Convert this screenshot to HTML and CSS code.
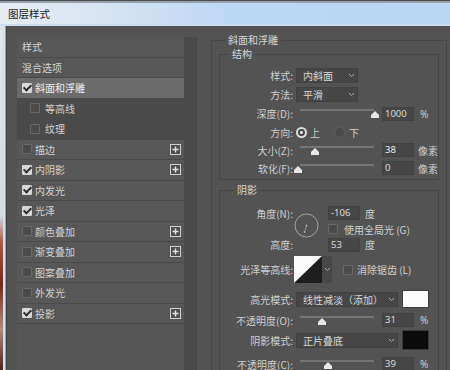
FILE: index.html
```html
<!DOCTYPE html>
<html lang="zh">
<head>
<meta charset="utf-8">
<title>图层样式</title>
<link rel="stylesheet" href="styles.css">
</head>
<body>
<div class="window">
  <div class="titlebar"><span class="title">图层样式</span></div>
  <div class="frame">
    <div class="edge"></div>
    <div class="client">
      <div class="listbox">
        <ul class="items">
          <li class="row">样式</li>
          <li class="row">混合选项</li>
          <li class="row selected"><span class="cb on"></span>斜面和浮雕</li>
          <li class="row sub"><span class="cb"></span>等高线</li>
          <li class="row sub"><span class="cb"></span>纹理</li>
          <li class="row"><span class="cb"></span>描边<svg class="plus" width="11" height="11" viewBox="0 0 11 11"><rect x="0.5" y="0.5" width="10" height="10" fill="#4f4f4f" stroke="#cfcfcf"/><path d="M5.5 2.5v6M2.5 5.5h6" stroke="#e2e2e2" stroke-width="1.4"/></svg></li>
          <li class="row"><span class="cb on"></span>内阴影<svg class="plus" width="11" height="11" viewBox="0 0 11 11"><rect x="0.5" y="0.5" width="10" height="10" fill="#4f4f4f" stroke="#cfcfcf"/><path d="M5.5 2.5v6M2.5 5.5h6" stroke="#e2e2e2" stroke-width="1.4"/></svg></li>
          <li class="row"><span class="cb on"></span>内发光</li>
          <li class="row"><span class="cb on"></span>光泽</li>
          <li class="row"><span class="cb"></span>颜色叠加<svg class="plus" width="11" height="11" viewBox="0 0 11 11"><rect x="0.5" y="0.5" width="10" height="10" fill="#4f4f4f" stroke="#cfcfcf"/><path d="M5.5 2.5v6M2.5 5.5h6" stroke="#e2e2e2" stroke-width="1.4"/></svg></li>
          <li class="row"><span class="cb"></span>渐变叠加<svg class="plus" width="11" height="11" viewBox="0 0 11 11"><rect x="0.5" y="0.5" width="10" height="10" fill="#4f4f4f" stroke="#cfcfcf"/><path d="M5.5 2.5v6M2.5 5.5h6" stroke="#e2e2e2" stroke-width="1.4"/></svg></li>
          <li class="row"><span class="cb"></span>图案叠加</li>
          <li class="row"><span class="cb"></span>外发光</li>
          <li class="row"><span class="cb on"></span>投影<svg class="plus" width="11" height="11" viewBox="0 0 11 11"><rect x="0.5" y="0.5" width="10" height="10" fill="#4f4f4f" stroke="#cfcfcf"/><path d="M5.5 2.5v6M2.5 5.5h6" stroke="#e2e2e2" stroke-width="1.4"/></svg></li>
        </ul>
        <div class="scroll"></div>
      </div>

      <div class="panel">
        <fieldset class="group outer">
          <legend>斜面和浮雕</legend>
          <fieldset class="group inner">
            <legend>结构</legend>
            <div class="frow">
              <span class="lbl">样式:</span>
              <div class="select w62"><span>内斜面</span><svg class="chev" width="7" height="5" viewBox="0 0 7 5"><path d="M1 1l2.5 2.5L6 1" fill="none" stroke="#a8a8a8"/></svg></div>
            </div>
            <div class="frow">
              <span class="lbl">方法:</span>
              <div class="select w62"><span>平滑</span><svg class="chev" width="7" height="5" viewBox="0 0 7 5"><path d="M1 1l2.5 2.5L6 1" fill="none" stroke="#a8a8a8"/></svg></div>
            </div>
            <div class="frow">
              <span class="lbl">深度(D):</span>
              <div class="slider"><div class="track"></div><svg class="thumb" style="margin-left:75px" width="8" height="7" viewBox="0 0 8 7"><polygon points="4,0 8,4 8,7 0,7 0,4" fill="#e8e8e8"/></svg></div>
              <span class="field">1000</span><span class="unit pct">%</span>
            </div>
            <div class="frow s">
              <span class="lbl">方向:</span>
              <svg class="radio" width="11" height="11" viewBox="0 0 11 11"><circle cx="5.5" cy="5.5" r="5.5" fill="#dedede"/><circle cx="5.5" cy="5.5" r="3.4" fill="#3a3a3a"/><circle cx="5.5" cy="5.5" r="1.7" fill="#dedede"/></svg><span class="rtext">上</span>
              <svg class="radio r2" width="11" height="11" viewBox="0 0 11 11"><circle cx="5.5" cy="5.5" r="5" fill="#4a4a4a" stroke="#606060"/></svg><span class="rtext">下</span>
            </div>
            <div class="frow s">
              <span class="lbl">大小(Z):</span>
              <div class="slider"><div class="track"></div><svg class="thumb" style="margin-left:15px" width="8" height="7" viewBox="0 0 8 7"><polygon points="4,0 8,4 8,7 0,7 0,4" fill="#e8e8e8"/></svg></div>
              <span class="field hi">38</span><span class="unit px">像素</span>
            </div>
            <div class="frow s">
              <span class="lbl">软化(F):</span>
              <div class="slider"><div class="track"></div><svg class="thumb" style="margin-left:-2px" width="8" height="7" viewBox="0 0 8 7"><polygon points="4,0 8,4 8,7 0,7 0,4" fill="#e8e8e8"/></svg></div>
              <span class="field">0</span><span class="unit px">像素</span>
            </div>
          </fieldset>

          <fieldset class="group inner shadow">
            <legend>阴影</legend>
            <div class="angle">
              <span class="lbl g1">角度(N):</span>
              <svg class="dial" width="25" height="25" viewBox="0 0 25 25"><circle cx="12.5" cy="12.5" r="11.5" fill="none" stroke="#a3a3a3"/><path d="M12.5 12.5L10.6 19" stroke="#9a9a9a" stroke-width="0.8"/><circle cx="12.5" cy="12.5" r="0.9" fill="#b0b0b0"/><circle cx="10.6" cy="19" r="0.9" fill="#b0b0b0"/></svg>
              <div class="ctl g1"><span class="field">-106</span><span class="unit deg">度</span></div>
              <div class="ctl g2"><span class="cb"></span><span class="ctext">使用全局光 (G)</span></div>
              <span class="lbl g3">高度:</span>
              <div class="ctl g3"><span class="field">53</span><span class="unit deg">度</span></div>
            </div>
            <div class="frow contour-row">
              <span class="lbl">光泽等高线:</span>
              <div class="contour">
                <svg width="28" height="27" viewBox="0 0 28 27"><rect width="28" height="27" fill="#1e1e1e"/><polygon points="0,0 28,0 0,27" fill="#fafafa"/></svg>
                <div class="cbtn"><svg class="chev" width="7" height="5" viewBox="0 0 7 5"><path d="M1 1l2.5 2.5L6 1" fill="none" stroke="#a8a8a8"/></svg></div>
              </div>
              <span class="cb aa"></span><span class="ctext">消除锯齿 (L)</span>
            </div>
            <div class="frow mode">
              <span class="lbl">高光模式:</span>
              <div class="select w102"><span>线性减淡（添加）</span><svg class="chev" width="7" height="5" viewBox="0 0 7 5"><path d="M1 1l2.5 2.5L6 1" fill="none" stroke="#a8a8a8"/></svg></div>
              <span class="swatch white"></span>
            </div>
            <div class="frow op op1">
              <span class="lbl">不透明度(O):</span>
              <div class="slider"><div class="track"></div><svg class="thumb" style="margin-left:22px" width="8" height="7" viewBox="0 0 8 7"><polygon points="4,0 8,4 8,7 0,7 0,4" fill="#e8e8e8"/></svg></div>
              <span class="field">31</span><span class="unit pct">%</span>
            </div>
            <div class="frow mode2">
              <span class="lbl">阴影模式:</span>
              <div class="select w102"><span>正片叠底</span><svg class="chev" width="7" height="5" viewBox="0 0 7 5"><path d="M1 1l2.5 2.5L6 1" fill="none" stroke="#a8a8a8"/></svg></div>
              <span class="swatch black"></span>
            </div>
            <div class="frow op op2">
              <span class="lbl">不透明度(C):</span>
              <div class="slider"><div class="track"></div><svg class="thumb" style="margin-left:28px" width="8" height="7" viewBox="0 0 8 7"><polygon points="4,0 8,4 8,7 0,7 0,4" fill="#e8e8e8"/></svg></div>
              <span class="field">39</span><span class="unit pct">%</span>
            </div>
          </fieldset>
        </fieldset>
      </div>
    </div>
  </div>
</div>
</body>
</html>
```

FILE: styles.css
```css
* { box-sizing: border-box; }
html, body { margin: 0; padding: 0; }
body {
  width: 450px;
  height: 370px;
  overflow: hidden;
  background: #535353;
  font-family: "Noto Sans CJK SC", "Noto Sans", sans-serif;
  font-size: 10px;
  color: #d0d0d0;
}

.window { display: flex; flex-direction: column; height: 370px; }

.titlebar {
  flex: none;
  height: 26px;
  display: flex;
  align-items: center;
  padding: 1px 0 0 8px;
  border-top: 1px solid #4c4c4c;
  background: linear-gradient(to right, #e7edf3 0%, #d6e3f1 25%, #bed8f4 50%, #b9d6f4 100%);
  box-shadow: inset 0 2px 0 #96a1ac, inset 0 -2px 0 #cddeef;
}
.title { font-size: 10.5px; color: #1c1c1c; line-height: 1; }

.frame { flex: 1; display: flex; min-height: 0; }
.edge {
  flex: none;
  width: 7px;
  background:
    linear-gradient(to right, transparent 0 3px, #d3dfeb 3px 5px, #9aa5b0 5px 6px, #414141 6px 7px),
    linear-gradient(to bottom, #dfe5eb 0%, #d5dce4 55%, #a35a4a 63%, #702a22 75%, #a98e80 88%, #4d2520 100%);
}
.client {
  flex: 1;
  min-width: 0;
  display: flex;
  align-items: flex-start;
  padding-left: 10px;
  background: #535353;
}

/* left list */
.listbox {
  flex: none;
  width: 180px;
  height: 333px;
  margin-top: 11px;
  display: flex;
  background: #565656;
}
.items { list-style: none; margin: 0; padding: 0; width: 167px; }
.scroll { width: 13px; background: #4b4b4b; border-right: 1px solid #444; }
.row {
  height: 20.5px;
  display: flex;
  align-items: center;
  padding-left: 5px;
  background: #575757;
  border-bottom: 1px solid #4a4a4a;
  color: #d2d2d2;
  white-space: nowrap;
}
.row.selected { background: #6b6b6b; color: #eeeeee; }
.row.sub { background: #4a4a4a; padding-left: 13px; }

.cb {
  flex: none;
  width: 10px;
  height: 10px;
  margin-right: 3px;
  border: 1px solid #686868;
  border-radius: 1px;
  background: #4b4b4b;
  display: flex;
  align-items: center;
  justify-content: center;
}
.row.sub .cb { margin-right: 5px; }
.cb.on { background: #d8d8d8; border-color: #d8d8d8; }
.cb.on::after {
  content: "";
  width: 3px;
  height: 6px;
  border: solid #2c2c2c;
  border-width: 0 2px 2px 0;
  transform: rotate(45deg);
  margin-top: -2px;
}
.plus { flex: none; margin-left: auto; margin-right: 3px; display: block; }

/* right panel */
.panel { flex: none; width: 236px; margin: 7px 0 0 14px; }
fieldset.group { margin: 0; min-width: 0; border: 1px solid #464646; }
fieldset.outer { border-bottom: none; padding: 0 7px; }
fieldset.inner { padding: 5px 0 2px 0; }
fieldset.shadow { margin-top: 3px; padding-top: 8px; border-bottom: none; }
legend {
  font-size: 10px;
  line-height: 14px;
  color: #d6d6d6;
  padding: 0 3px;
  margin-left: 6px;
}
.inner > legend { margin-left: 9px; }
.shadow > legend { margin-left: 14px; }

.frow { display: flex; align-items: center; height: 19px; white-space: nowrap; }
.frow.s { height: 18px; }
.lbl { flex: none; width: 73px; margin-right: 3px; text-align: right; color: #cfcfcf; }

.select {
  flex: none;
  display: flex;
  align-items: center;
  justify-content: space-between;
  height: 15px;
  padding: 0 2px 0 6px;
  background: #474747;
  border: 1px solid #414141;
  color: #d8d8d8;
  line-height: 13px;
}
.w62 { width: 62px; }
.w102 { width: 102px; }
.chev { display: block; flex: none; }

.slider {
  flex: none;
  width: 82px;
  height: 12px;
  margin-top: 3px;
  display: flex;
  flex-direction: column;
}
.track { height: 2px; margin: 0 4px; background: #747474; }
.thumb { display: block; flex: none; }

.field {
  flex: none;
  width: 32px;
  height: 14px;
  padding-left: 2px;
  background: #474747;
  border: 1px solid #424242;
  font-family: "Noto Sans", sans-serif;
  font-size: 9.5px;
  line-height: 12px;
  color: #dadada;
}
.field.hi { color: #e4ebf5; }
.slider + .field { margin-left: 4px; }
.unit { flex: none; color: #cfcfcf; }
.unit.pct { margin-left: 6px; font-family: "Noto Sans", sans-serif; }
.unit.px { margin-left: 4px; }
.unit.deg { margin-left: 5px; }

.radio { display: block; flex: none; }
.rtext { margin-left: 3px; }
.radio.r2 { margin-left: 14px; }
.radio.r2 + .rtext { margin-left: 4px; }

/* shadow section */
.angle {
  display: grid;
  grid-template-columns: 73px 35px auto;
  grid-template-rows: 16px 16px 15px;
  white-space: nowrap;
}
.angle .lbl { width: auto; margin-right: 0; align-self: center; grid-column: 1; }
.g1 { grid-row: 1; }
.g2 { grid-row: 2; }
.g3 { grid-row: 3; }
.dial { grid-column: 2; grid-row: 1 / 4; align-self: start; margin: 8px 0 0 1px; display: block; }
.ctl { grid-column: 3; display: flex; align-items: center; }
.ctl .cb { margin-right: 6px; }
.ctext { color: #cfcfcf; }

.contour-row { height: 27px; margin-top: 4px; }
.contour { flex: none; display: flex; margin-left: -2px; }
.contour svg { display: block; }
.cbtn { width: 10px; height: 27px; background: #474747; display: flex; align-items: center; justify-content: center; }
.cb.aa { margin-left: 11px; margin-right: 4px; }

.mode { height: 18px; margin-top: 7px; }
.op1 { height: 16px; margin-top: 4px; }
.mode2 { height: 20px; margin-top: 2px; }
.op2 { height: 16px; margin-top: 6px; }

.swatch { flex: none; width: 27px; margin-left: 4px; border: 1px solid #3c3c3c; }
.swatch.white { height: 18px; background: #fbfbfb; }
.swatch.black { height: 20px; background: #0b0b0b; }
```
